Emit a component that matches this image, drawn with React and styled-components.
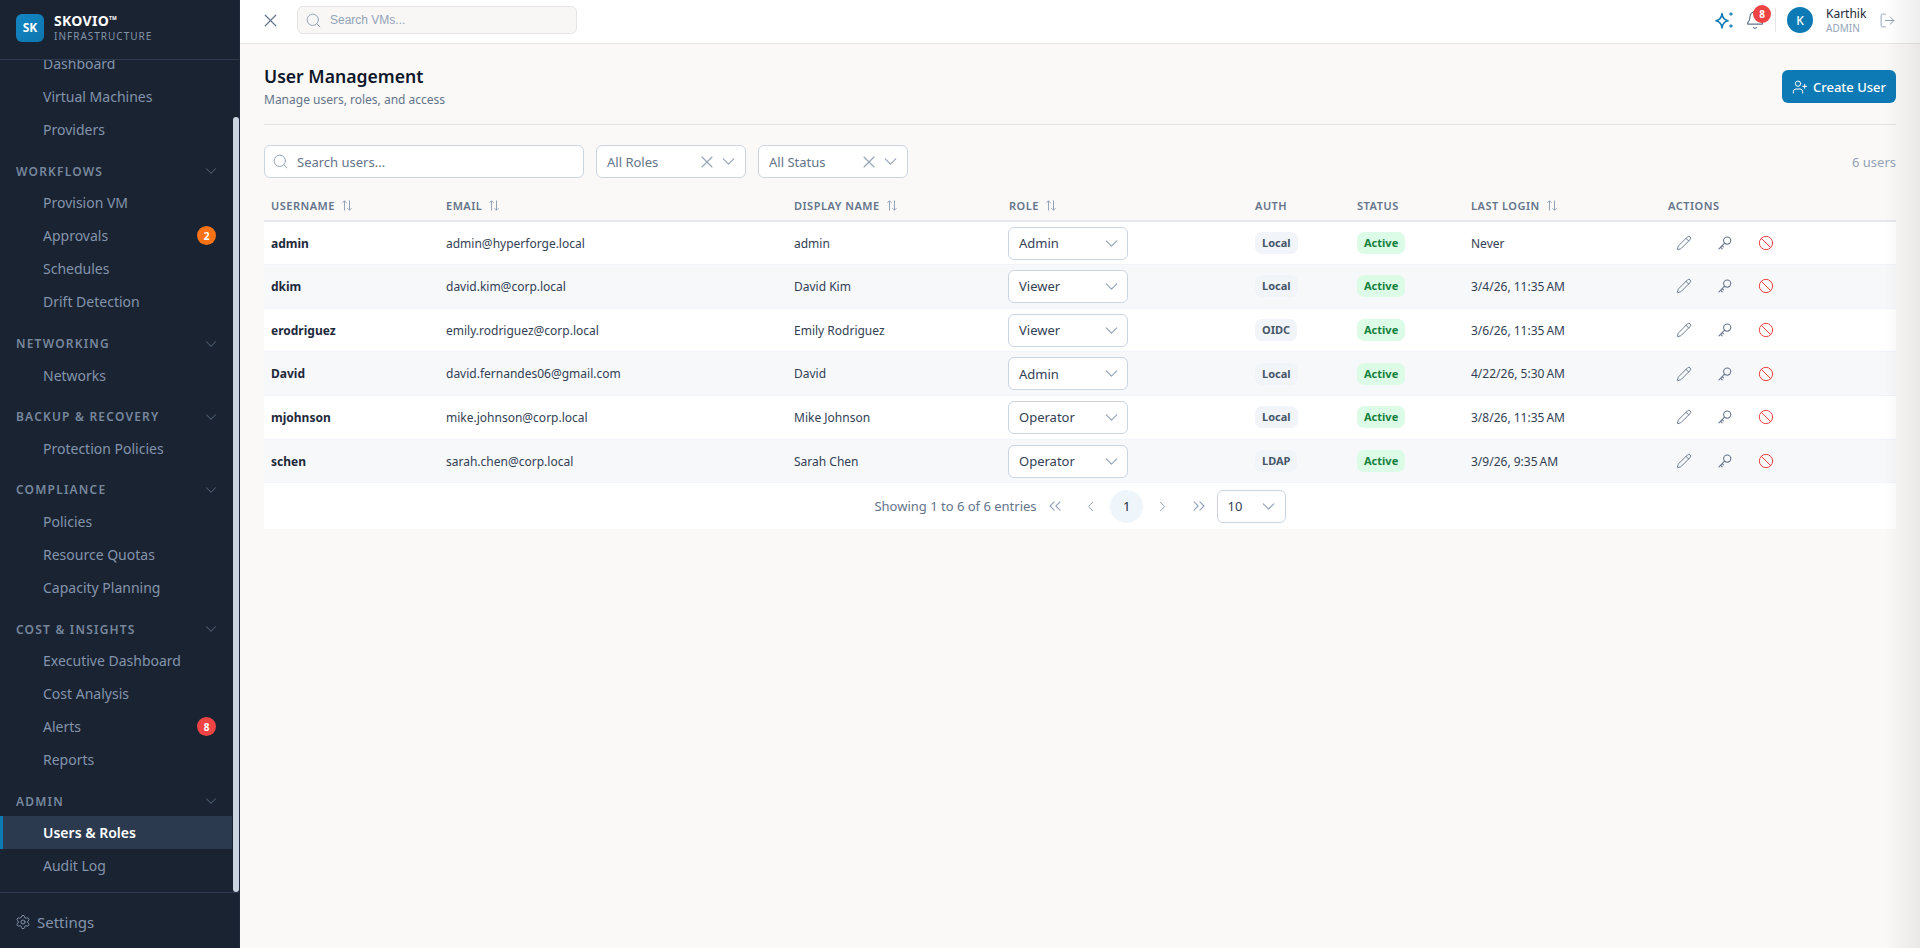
import styled, { createGlobalStyle } from "styled-components";
import {
  X, Search, ChevronDown, Settings, Bell, LogOut, UserPlus,
  Pencil, Ban, ChevronsLeft, ChevronsRight, ChevronLeft, ChevronRight,
} from "lucide-react";

const GlobalStyle = createGlobalStyle`
  html, body {
    margin: 0;
    height: 100%;
    overflow: hidden;
    font-family: "Noto Sans", sans-serif;
    background: #faf9f7;
  }
  * { box-sizing: border-box; }
`;

const Shell = styled.div`
  display: flex;
  height: 948px;
  position: relative;
`;
const EdgeShade = styled.div`
  position: absolute;
  top: 0;
  right: 0;
  bottom: 0;
  width: 36px;
  background: linear-gradient(to right, rgba(0, 0, 0, 0), rgba(0, 0, 0, 0.065));
  pointer-events: none;
`;
const Sidebar = styled.aside`
  width: 240px;
  flex-shrink: 0;
  background: #1a2332;
  display: flex;
  flex-direction: column;
  border-right: 1px solid #1e293b;
`;
const Brand = styled.div`
  height: 60px;
  flex-shrink: 0;
  display: flex;
  align-items: center;
  gap: 10px;
  padding: 0 16px 4px;
  border-bottom: 1px solid #2d3a4e;
`;
const LogoBox = styled.div`
  width: 28px;
  height: 28px;
  border-radius: 6px;
  background: linear-gradient(135deg, #1486c4, #0e76ae);
  color: #fff;
  font-size: 12px;
  font-weight: 700;
  display: flex;
  align-items: center;
  justify-content: center;
`;
const BrandText = styled.div`
  display: flex;
  flex-direction: column;
`;
const BrandName = styled.div`
  color: #fff;
  font-size: 14px;
  font-weight: 700;
  line-height: 16px;
  letter-spacing: 0.3px;
  sup {
    font-size: 5px;
    line-height: 0;
    vertical-align: 6px;
    letter-spacing: 0;
  }
`;
const BrandSub = styled.div`
  color: #8494a8;
  font-size: 10px;
  line-height: 14px;
  letter-spacing: 1px;
`;
const NavScroll = styled.div`
  flex: 1;
  min-height: 0;
  position: relative;
  overflow: hidden;
`;
const NavInner = styled.nav`
  margin-top: -23px;
`;
const ScrollThumb = styled.div`
  position: absolute;
  right: 0;
  top: 57px;
  bottom: 0;
  width: 6px;
  border-radius: 3px;
  background: #cbd5e1;
`;
const NavGroup = styled.div`
  padding-top: 10.2px;
`;
const GroupHead = styled.div`
  height: 30px;
  padding: 0 19px 0 16px;
  display: flex;
  align-items: center;
  justify-content: space-between;
  color: #77879c;
  font-size: 12px;
  font-weight: 600;
  letter-spacing: 1.2px;
  text-transform: uppercase;
  svg { color: #4f5e73; }
`;
const NavItem = styled.div`
  height: 33px;
  padding: 0 16px 0 ${p => (p.$active ? 40 : 43)}px;
  margin-right: 7px;
  display: flex;
  align-items: center;
  justify-content: space-between;
  font-size: 14px;
  color: ${p => (p.$active ? "#fff" : "#8494ab")};
  font-weight: ${p => (p.$active ? 600 : 400)};
  background: ${p => (p.$active ? "#2c3a50" : "transparent")};
  border-left: ${p => (p.$active ? "3px solid #0e7ab5" : "none")};
`;
const CountBadge = styled.span`
  width: 19px;
  height: 19px;
  border-radius: 50%;
  background: ${p => p.$color};
  color: #fff;
  font-size: 10px;
  font-weight: 700;
  display: flex;
  align-items: center;
  justify-content: center;
`;
const SideFoot = styled.div`
  height: 56px;
  flex-shrink: 0;
  display: flex;
  align-items: center;
  gap: 6px;
  padding: 2px 15px 0;
  color: #8494ab;
  font-size: 15px;
  border-top: 1px solid #2d3a4e;
`;
const Main = styled.div`
  flex: 1;
  min-width: 0;
  display: flex;
  flex-direction: column;
`;
const TopBar = styled.header`
  height: 44px;
  flex-shrink: 0;
  background: #fff;
  border-bottom: 1px solid #e7e5e4;
  display: flex;
  align-items: center;
  padding: 0 24px 3px 20px;
`;
const IconBtn = styled.span`
  display: inline-flex;
  align-items: center;
  justify-content: center;
  color: ${p => p.$color || "#64748b"};
`;
const TopSearch = styled.div`
  margin-left: 16px;
  width: 280px;
  height: 28px;
  background: #f8f7f5;
  border: 1px solid #e7e5e4;
  border-radius: 6px;
  display: flex;
  align-items: center;
  gap: 8px;
  padding: 0 7px;
  color: #94a3b8;
  font-family: "Liberation Sans", sans-serif;
  font-size: 12px;
`;
const TopRight = styled.div`
  margin-left: auto;
  display: flex;
  align-items: center;
`;
const BellWrap = styled.div`
  position: relative;
  margin-left: 12px;
  height: 20px;
  display: flex;
`;
const BellBadge = styled.span`
  position: absolute;
  top: -5px;
  left: 8px;
  width: 18px;
  height: 18px;
  border-radius: 50%;
  background: #ef4444;
  color: #fff;
  font-size: 10px;
  font-weight: 700;
  display: flex;
  align-items: center;
  justify-content: center;
`;
const VDivider = styled.div`
  width: 1px;
  height: 24px;
  background: #e7e5e4;
  margin: 0 11px 0 10px;
`;
const Avatar = styled.div`
  width: 26px;
  height: 26px;
  border-radius: 50%;
  background: #0e7ab5;
  color: #fff;
  font-size: 12px;
  font-weight: 500;
  display: flex;
  align-items: center;
  justify-content: center;
`;
const UserBlock = styled.div`
  margin-left: 13px;
  width: 53px;
`;
const UserName = styled.div`
  font-size: 12px;
  line-height: 16px;
  color: #1e293b;
`;
const UserRole = styled.div`
  font-size: 10px;
  line-height: 13px;
  color: #94a3b8;
`;
const Content = styled.main`
  flex: 1;
  padding: 16px 24px;
`;
const PageHead = styled.div`
  display: flex;
  align-items: flex-start;
  justify-content: space-between;
  border-bottom: 1px solid #e7e5e4;
  height: 65px;
`;
const Title = styled.h1`
  margin: 2px 0 0;
  font-size: 17.6px;
  line-height: 28px;
  font-weight: 600;
  color: #0f172a;
`;
const Subtitle = styled.p`
  margin: 1px 0 0;
  font-size: 12px;
  line-height: 18px;
  color: #64748b;
`;
const CreateButton = styled.button`
  width: 114px;
  height: 33px;
  margin-top: 10px;
  border: none;
  border-radius: 6px;
  background: #0e7ab5;
  color: #fff;
  font: 500 13px "Noto Sans", sans-serif;
  display: flex;
  align-items: center;
  justify-content: center;
  gap: 5px;
`;
const FilterRow = styled.div`
  display: flex;
  align-items: center;
  gap: 12px;
  margin-top: 20px;
`;
const SearchBox = styled.div`
  width: 320px;
  height: 33px;
  background: #fff;
  border: 1px solid #cbd5e1;
  border-radius: 6px;
  display: flex;
  align-items: center;
  gap: 8px;
  padding: 0 7px;
  color: #64748b;
  font-size: 13px;
  svg { color: #94a3b8; }
`;
const Dropdown = styled.div`
  width: ${p => p.$width}px;
  height: 33px;
  background: #fff;
  border: 1px solid #cbd5e1;
  border-radius: 6px;
  display: flex;
  align-items: center;
  padding: 0 6px 0 10px;
  color: ${p => (p.$dark ? "#334155" : "#64748b")};
  font-size: 13px;
  svg { color: #94a3b8; flex-shrink: 0; }
  span { flex: 1; }
`;
const RoleSelect = styled(Dropdown)`
  margin-left: -1px;
  padding-right: 5px;
`;
const Clear = styled(X)`
  margin-right: 1px;
`;
const Count = styled.div`
  margin-left: auto;
  color: #94a3b8;
  font-size: 13px;
`;
const Table = styled.table`
  width: 100%;
  border-collapse: collapse;
  table-layout: fixed;
  margin-top: 13px;
`;
const Th = styled.th`
  width: ${p => p.$width}px;
  height: 30px;
  padding: 0 7px;
  text-align: left;
  color: #64748b;
  font-size: 11px;
  font-weight: 600;
  letter-spacing: 0.5px;
  text-transform: uppercase;
  border-bottom: 2px solid #e5e7eb;
  white-space: nowrap;
`;
const SortIcon = styled.svg`
  width: 10px;
  height: 11px;
  margin-left: 7px;
  vertical-align: -1px;
  color: #94a3b8;
`;
const Tr = styled.tr`
  height: 43.67px;
  background: ${p => (p.$alt ? "#f6f8fa" : "#fff")};
  border-bottom: 1px solid #f1f5f9;
`;
const Td = styled.td`
  padding: 0 7px;
  font-size: 12px;
  color: ${p => (p.$strong ? "#1e293b" : "#334155")};
  font-weight: ${p => (p.$strong ? 700 : 400)};
`;
const Pill = styled.span`
  display: inline-block;
  padding: 0 7px;
  height: 22px;
  line-height: 22px;
  border-radius: 7px;
  font-size: 11px;
  font-weight: 700;
  background: ${p => (p.$green ? "#dcfce7" : "#f1f5f9")};
  color: ${p => (p.$green ? "#15803d" : "#475569")};
`;
const Actions = styled.div`
  display: flex;
  gap: 25px;
  padding-left: 8px;
`;
const Pager = styled.div`
  height: 46px;
  background: #fff;
  display: flex;
  align-items: center;
  justify-content: center;
  color: #64748b;
  font-size: 13px;
`;
const PageIcon = styled(IconBtn)`
  width: 36px;
  color: ${p => p.$color || "#94a3b8"};
`;
const PageCurrent = styled.div`
  width: 33px;
  height: 33px;
  margin: 0 1.5px;
  border-radius: 50%;
  background: #eff6fb;
  color: #1e293b;
  display: flex;
  align-items: center;
  justify-content: center;
`;

const groups = [
  { items: [{ n: "Dashboard" }, { n: "Virtual Machines" }, { n: "Providers" }] },
  { head: "Workflows", items: [{ n: "Provision VM" }, { n: "Approvals", badge: "2", color: "#f97316" }, { n: "Schedules" }, { n: "Drift Detection" }] },
  { head: "Networking", items: [{ n: "Networks" }] },
  { head: "Backup & Recovery", items: [{ n: "Protection Policies" }] },
  { head: "Compliance", items: [{ n: "Policies" }, { n: "Resource Quotas" }, { n: "Capacity Planning" }] },
  { head: "Cost & Insights", items: [{ n: "Executive Dashboard" }, { n: "Cost Analysis" }, { n: "Alerts", badge: "8", color: "#ef4444" }, { n: "Reports" }] },
  { head: "Admin", items: [{ n: "Users & Roles", active: true }, { n: "Audit Log" }] },
];

const users = [
  ["admin", "admin@hyperforge.local", "admin", "Admin", "Local", "Never"],
  ["dkim", "david.kim@corp.local", "David Kim", "Viewer", "Local", "3/4/26, 11:35\u202fAM"],
  ["erodriguez", "emily.rodriguez@corp.local", "Emily Rodriguez", "Viewer", "OIDC", "3/6/26, 11:35\u202fAM"],
  ["David", "david.fernandes06@gmail.com", "David", "Admin", "Local", "4/22/26, 5:30\u202fAM"],
  ["mjohnson", "mike.johnson@corp.local", "Mike Johnson", "Operator", "Local", "3/8/26, 11:35\u202fAM"],
  ["schen", "sarah.chen@corp.local", "Sarah Chen", "Operator", "LDAP", "3/9/26, 9:35\u202fAM"],
];

const columns = [
  ["Username", 175, true], ["Email", 348, true], ["Display Name", 215, true], ["Role", 246, true],
  ["Auth", 102], ["Status", 114], ["Last Login", 197, true], ["Actions", 235],
];

const Sort = () => (
  <SortIcon viewBox="0 0 10 11" fill="none" stroke="currentColor" strokeWidth="1">
    <path d="M2.5 10.5V.8M.5 2.8l2-2 2 2" />
    <path d="M7.5.5v9.7M5.5 8.2l2 2 2-2" />
  </SortIcon>
);

const SparkleIcon = () => (
  <svg width="18" height="18" viewBox="0 0 18 18" fill="none" stroke="#0e7ab5" strokeWidth="1.6" strokeLinejoin="round">
    <path d="M7 2.6C7.4 6.6 9 8.8 13 9.8 9 10.8 7.4 13 7 17 6.6 13 5 10.8 1 9.8 5 8.8 6.6 6.6 7 2.6Z" />
    <path d="M16 1.4l.5 1.1 1.1.5-1.1.5-.5 1.1-.5-1.1-1.1-.5 1.1-.5ZM16 13.4l.5 1.1 1.1.5-1.1.5-.5 1.1-.5-1.1-1.1-.5 1.1-.5Z" fill="#0e7ab5" strokeWidth="0.8" />
  </svg>
);

const KeyIcon = () => (
  <svg width="16" height="16" viewBox="0 0 16 16" fill="none" stroke="#64748b" strokeWidth="1.1" strokeLinecap="round">
    <circle cx="10.2" cy="5.6" r="3.6" />
    <path d="M7.6 8.2L2 13.8M3.6 12.2l1.6 1.6M5.2 10.6l1.2 1.2" />
  </svg>
);

export default function App() {
  return (
    <Shell>
      <GlobalStyle />
      <Sidebar>
        <Brand>
          <LogoBox>SK</LogoBox>
          <BrandText>
            <BrandName>SKOVIO<sup>TM</sup></BrandName>
            <BrandSub>INFRASTRUCTURE</BrandSub>
          </BrandText>
        </Brand>
        <NavScroll>
          <NavInner>
            {groups.map((g, i) => (
              <NavGroup key={i}>
                {g.head && (
                  <GroupHead>
                    {g.head}
                    <ChevronDown size={18} strokeWidth={1.4} />
                  </GroupHead>
                )}
                {g.items.map(it => (
                  <NavItem key={it.n} $active={it.active}>
                    {it.n}
                    {it.badge && <CountBadge $color={it.color}>{it.badge}</CountBadge>}
                  </NavItem>
                ))}
              </NavGroup>
            ))}
          </NavInner>
          <ScrollThumb />
        </NavScroll>
        <SideFoot>
          <Settings size={16} strokeWidth={1.5} />
          Settings
        </SideFoot>
      </Sidebar>
      <Main>
        <TopBar>
          <IconBtn><X size={21} strokeWidth={1.4} /></IconBtn>
          <TopSearch>
            <Search size={17} strokeWidth={1.4} />
            Search VMs...
          </TopSearch>
          <TopRight>
            <SparkleIcon />
            <BellWrap>
              <IconBtn><Bell size={20} strokeWidth={1.4} /></IconBtn>
              <BellBadge>8</BellBadge>
            </BellWrap>
            <VDivider />
            <Avatar>K</Avatar>
            <UserBlock>
              <UserName>Karthik</UserName>
              <UserRole>ADMIN</UserRole>
            </UserBlock>
            <IconBtn $color="#94a3b8"><LogOut size={17} strokeWidth={1.4} /></IconBtn>
          </TopRight>
        </TopBar>
        <Content>
          <PageHead>
            <div>
              <Title>User Management</Title>
              <Subtitle>Manage users, roles, and access</Subtitle>
            </div>
            <CreateButton><UserPlus size={16} strokeWidth={1.5} />Create User</CreateButton>
          </PageHead>
          <FilterRow>
            <SearchBox><Search size={17} strokeWidth={1.4} />Search users...</SearchBox>
            <Dropdown $width={150}>
              <span>All Roles</span>
              <Clear size={20} strokeWidth={1.3} />
              <ChevronDown size={21} strokeWidth={1.3} />
            </Dropdown>
            <Dropdown $width={150}>
              <span>All Status</span>
              <Clear size={20} strokeWidth={1.3} />
              <ChevronDown size={21} strokeWidth={1.3} />
            </Dropdown>
            <Count>6 users</Count>
          </FilterRow>
          <Table>
            <thead>
              <tr>
                {columns.map(([label, w, sortable]) => (
                  <Th key={label} $width={w}>{label}{sortable && <Sort />}</Th>
                ))}
              </tr>
            </thead>
            <tbody>
              {users.map((u, i) => (
                <Tr key={u[0]} $alt={i % 2 === 1}>
                  <Td $strong>{u[0]}</Td>
                  <Td>{u[1]}</Td>
                  <Td>{u[2]}</Td>
                  <Td>
                    <RoleSelect $width={120} $dark>
                      <span>{u[3]}</span>
                      <ChevronDown size={21} strokeWidth={1.3} />
                    </RoleSelect>
                  </Td>
                  <Td><Pill>{u[4]}</Pill></Td>
                  <Td><Pill $green>Active</Pill></Td>
                  <Td>{u[5]}</Td>
                  <Td>
                    <Actions>
                      <IconBtn><Pencil size={16} strokeWidth={1.4} /></IconBtn>
                      <KeyIcon />
                      <IconBtn $color="#ef4444"><Ban size={16} strokeWidth={1.5} /></IconBtn>
                    </Actions>
                  </Td>
                </Tr>
              ))}
            </tbody>
          </Table>
          <Pager>
            <span>Showing 1 to 6 of 6 entries</span>
            <PageIcon><ChevronsLeft size={20} strokeWidth={1.3} /></PageIcon>
            <PageIcon><ChevronLeft size={17} strokeWidth={1.4} /></PageIcon>
            <PageCurrent>1</PageCurrent>
            <PageIcon><ChevronRight size={17} strokeWidth={1.4} /></PageIcon>
            <PageIcon><ChevronsRight size={20} strokeWidth={1.3} /></PageIcon>
            <Dropdown $width={69} $dark>
              <span>10</span>
              <ChevronDown size={21} strokeWidth={1.3} />
            </Dropdown>
          </Pager>
        </Content>
      </Main>
      <EdgeShade />
    </Shell>
  );
}
